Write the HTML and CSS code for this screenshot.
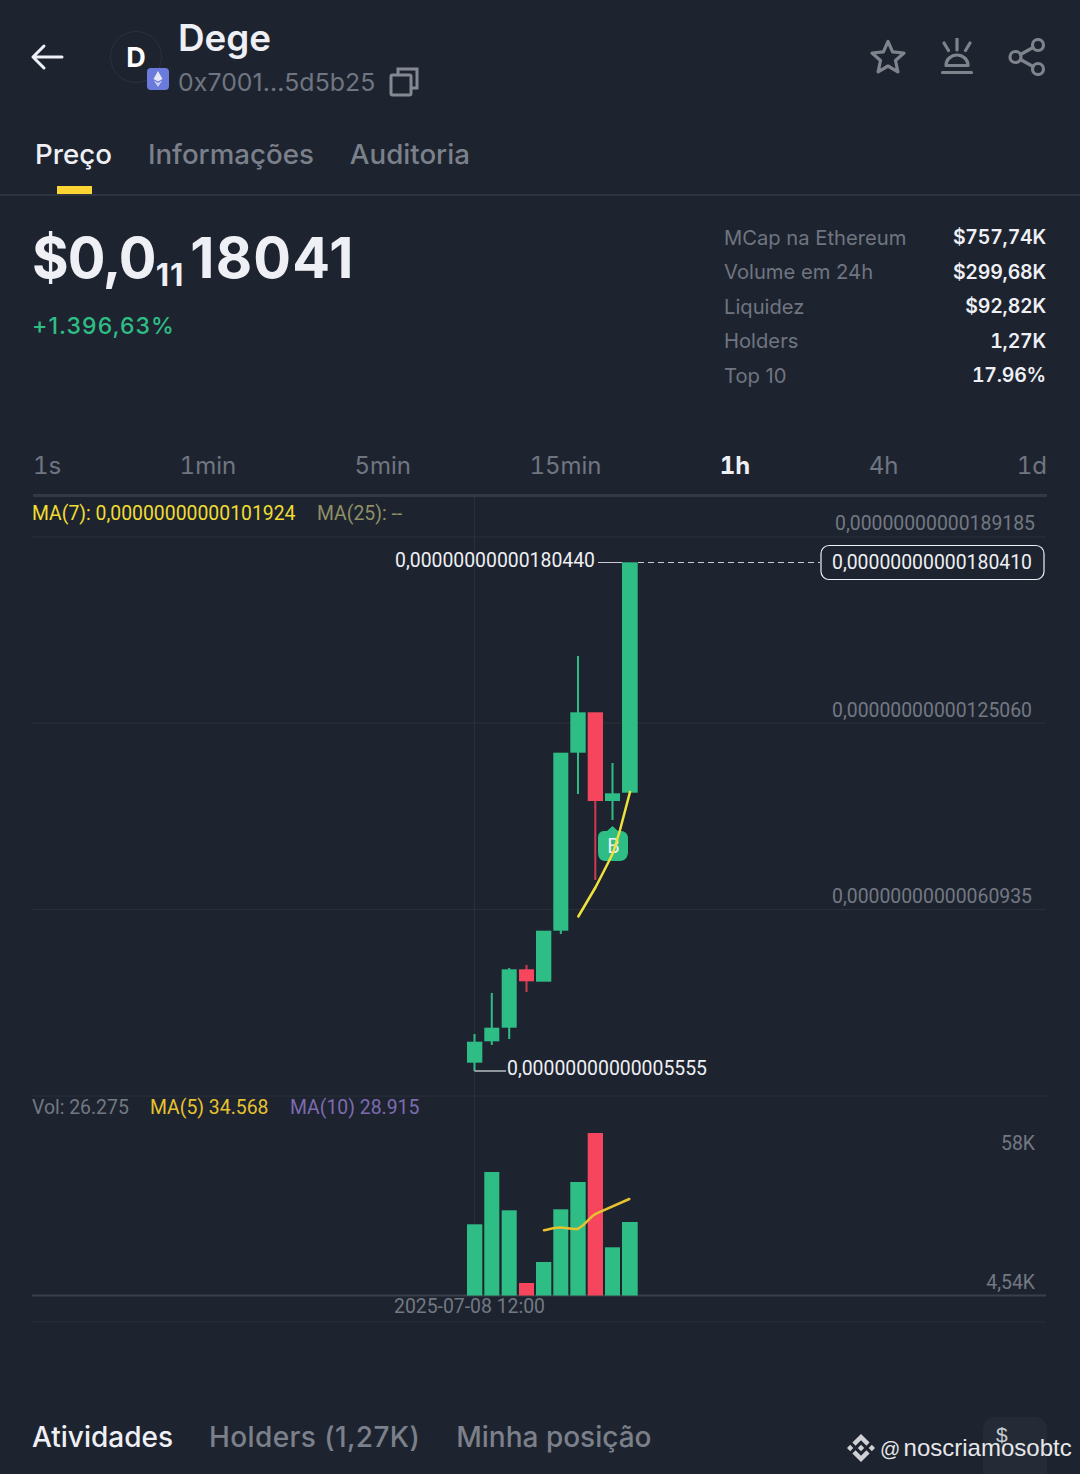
FILE: index.html
```html
<!DOCTYPE html>
<html lang="pt">
<head>
<meta charset="utf-8">
<title>Dege</title>
<link rel="stylesheet" href="styles.css">
</head>
<body>
<div class="page">
  <header class="top">
    <svg class="back" viewBox="0 0 34 28" width="34" height="28"><path d="M32 14H3M14 3 3 14l11 11"/></svg>
    <div class="avatar"><span>D</span>
      <svg class="chain" viewBox="0 0 22 22" width="22" height="22"><rect width="22" height="22" rx="4" fill="#6a7bdc"/><path d="M11 3 6.500 11 11 13.500 15.500 11z" fill="#e4e7f8"/><path d="M6.800 12.500 11 19l4.200-6.500L11 15z" fill="#cfd4f2"/></svg>
    </div>
    <div class="token">
      <div class="name">Dege</div>
      <div class="addr"><span>0x7001...5d5b25</span>
        <svg class="copy" viewBox="0 0 30 30" width="30" height="30"><path d="M9 7V2h19v19h-6"/><rect x="2" y="8" width="20" height="20" rx="1.500"/></svg>
      </div>
    </div>
    <div class="actions">
      <svg viewBox="0 0 36 36" width="36" height="36"><path d="M18 2.500 22.600 12.800 34 14 25.500 21.500 27.900 32.800 18 27 8.100 32.800 10.500 21.500 2 14 13.400 12.800z"/></svg>
      <svg viewBox="0 0 36 38" width="36" height="38"><path d="M18 1v11M5 5l4.500 7.500M31 5l-4.500 7.500M7 27.500c0-6 5-10.500 11-10.500s11 4.500 11 10.500zM3.500 34.500h29"/></svg>
      <svg viewBox="0 0 38 38" width="38" height="38"><circle cx="30" cy="7" r="5.500"/><circle cx="7.500" cy="19" r="5.500"/><circle cx="30" cy="31" r="5.500"/><path d="m12.500 16.500 12.500-7M12.500 21.500l12.500 7"/></svg>
    </div>
  </header>

  <nav class="tabs">
    <a class="tab on">Preço</a><a class="tab">Informações</a><a class="tab">Auditoria</a>
  </nav>

  <section class="summary">
    <div class="price-box">
      <div class="price">$0,0<sub>11</sub><span class="digits">18041</span></div>
      <div class="change">+1.396,63%</div>
    </div>
    <dl class="stats">
      <div><dt>MCap na Ethereum</dt><dd>$757,74K</dd></div>
      <div><dt>Volume em 24h</dt><dd>$299,68K</dd></div>
      <div><dt>Liquidez</dt><dd>$92,82K</dd></div>
      <div><dt>Holders</dt><dd>1,27K</dd></div>
      <div><dt>Top 10</dt><dd>17.96%</dd></div>
    </dl>
  </section>

  <div class="frames">
    <span>1s</span><span>1min</span><span>5min</span><span>15min</span><span class="on">1h</span><span>4h</span><span>1d</span>
  </div>

  <svg class="chart" viewBox="0 497 1080 830" width="1080" height="830">
    <g class="grid">
      <path d="M32 537H1046M32 723H1046M32 909.500H1046M32 1096H1046M32 1322H1046M474.500 497V1295"/>
      <path class="base" d="M32 1295.500H1046"/>
    </g>

    <text class="lb yellow" x="32" y="520">MA(7): 0,00000000000101924</text>
    <text class="lb olive" x="317" y="520">MA(25): --</text>
    <text class="lb grey end" x="1035" y="530">0,00000000000189185</text>
    <text class="lb grey end" x="1032" y="717">0,00000000000125060</text>
    <text class="lb grey end" x="1032" y="903">0,00000000000060935</text>

    <text class="lb white end" x="595" y="567">0,00000000000180440</text>
    <path class="hl" d="M598 562.500H622"/>
    <path class="dash" d="M638 562.500H820"/>
    <rect class="cur" x="821" y="545.500" width="223" height="34" rx="8"/>
    <text class="lb white" x="832" y="569">0,00000000000180410</text>

    <g class="up">
      <path class="wk" d="M474.500 1034V1071M491.800 993V1045M509.200 968V1039M560.800 930V934M578 656V794M612.500 763V820"/>
      <rect x="467" y="1041.700" width="15.300" height="21"/>
      <rect x="484.300" y="1027.700" width="15" height="13.600"/>
      <rect x="501.700" y="969.300" width="15" height="58.400"/>
      <rect x="536" y="930.700" width="15.300" height="51"/>
      <rect x="553.300" y="752.700" width="15" height="178"/>
      <rect x="570.300" y="712.300" width="15.400" height="40.400"/>
      <rect x="605" y="793.300" width="15" height="7.700"/>
      <rect x="622" y="562.300" width="15.700" height="230.400"/>
    </g>
    <g class="down">
      <path class="wk" d="M526.500 965V992M595.300 801V880"/>
      <rect x="519" y="969.300" width="15" height="12"/>
      <rect x="587.700" y="712.300" width="15.300" height="88.700"/>
    </g>

    <path class="marker" d="M612.500 826 618 831H621C625 831 628 834 628 838V852C628 857 625 861 620 861H605C600 861 598 857 598 852V838C598 834 600 831 604 831H607z"/>
    <text class="b" x="613.500" y="852.500">B</text>
    <path class="ma" d="M578.300 916.500 595.700 887 607 865 613 853 620 830 630 792"/>

    <path class="ll" d="M474.500 1071H506"/>
    <text class="lb white" x="507" y="1075">0,00000000000005555</text>

    <text class="lb grey" x="32" y="1114">Vol: 26.275</text>
    <text class="lb gold" x="150" y="1114">MA(5) 34.568</text>
    <text class="lb violet" x="290" y="1114">MA(10) 28.915</text>

    <g class="up">
      <rect x="467" y="1224.300" width="15.300" height="71.200"/>
      <rect x="484.300" y="1172" width="15" height="123.500"/>
      <rect x="501.700" y="1210.300" width="15" height="85.200"/>
      <rect x="536" y="1262" width="15.300" height="33.500"/>
      <rect x="553.300" y="1209.300" width="15" height="86.200"/>
      <rect x="570.300" y="1182" width="15.400" height="113.500"/>
      <rect x="605" y="1247.300" width="15" height="48.200"/>
      <rect x="622" y="1222" width="15.700" height="73.500"/>
    </g>
    <g class="down">
      <rect x="519" y="1283" width="15" height="12.500"/>
      <rect x="587.700" y="1133" width="15.300" height="162.500"/>
    </g>
    <path class="ma5" d="M544 1230.300C550 1229 555 1227.500 560 1227.500S572 1229.500 577.300 1229C585 1226 590 1216 596.700 1213.300L629.300 1199"/>

    <text class="lb grey end" x="1035" y="1150">58K</text>
    <text class="lb grey end" x="1035" y="1289">4,54K</text>
    <text class="lb grey" x="394" y="1313">2025-07-08 12:00</text>
  </svg>

  <nav class="bottom">
    <a class="on">Atividades</a><a class="wide">Holders (1,27K)</a><a>Minha posição</a>
  </nav>

  <div class="fab">$</div>
  <div class="mark">
    <svg viewBox="0 0 126.610 126.610" width="28" height="28"><path d="M38.730 53.200 63.320 28.620l24.600 24.600 14.300-14.310L63.320 0 24.420 38.900zM0 63.310 14.300 49l14.310 14.310-14.310 14.300zM38.730 73.410 63.320 98l24.600-24.600 14.310 14.290-38.900 38.910-38.910-38.880zM98 63.310 112.300 49l14.310 14.300-14.310 14.320zM77.830 63.300 63.320 48.780 52.590 59.510l-1.240 1.230-2.540 2.540 14.510 14.500 14.510-14.470z"/></svg>
    <span><span class="at">@</span> noscriamosobtc</span>
  </div>
</div>
</body>
</html>
```

FILE: styles.css
```css
* { box-sizing: border-box; margin: 0; padding: 0; }
html, body { background: #1e242f; }
body { font-family: Inter, "Liberation Sans", sans-serif; color: #eef0f5; }
.page { position: relative; width: 1080px; height: 1474px; overflow: hidden; }

.top { display: flex; align-items: flex-start; height: 130px; padding: 16px 34px 0 30px; }
.back { margin: 27px 0 0 0; flex: none; fill: none; stroke: #eef0f5; stroke-width: 3; stroke-linecap: round; stroke-linejoin: round; }
.avatar { position: relative; flex: none; width: 52px; height: 52px; margin: 15px 16px 0 46px; border: 1px solid #2b323d; border-radius: 50%; display: flex; align-items: center; justify-content: center; font-size: 27px; font-weight: 700; color: #fff; }
.chain { position: absolute; right: -8px; bottom: -8px; }
.name { font-size: 36.800px; font-weight: 600; line-height: 44px; }
.addr { display: flex; align-items: center; gap: 13px; margin-top: 5px; font-size: 24.800px; letter-spacing: 0.100px; line-height: 34px; color: #6f7581; }
.copy { fill: none; stroke: #848892; stroke-width: 3; }
.actions { margin-left: auto; display: flex; align-items: center; gap: 33px; padding-top: 22px; }
.actions svg { fill: none; stroke: #7f838c; stroke-width: 3.200; stroke-linecap: round; stroke-linejoin: round; }

.tabs { display: flex; gap: 36px; height: 66px; padding: 6px 0 0 35px; border-bottom: 2px solid #2f3540; }
.tab { position: relative; font-size: 27.700px; font-weight: 500; line-height: 36px; color: #7b808b; }
.tab.on { color: #eef0f5; }
.tab.on::after { content: ""; position: absolute; left: 22px; top: 50px; width: 35px; height: 8px; background: #fcd535; }

.summary { display: flex; justify-content: space-between; height: 233px; padding: 28px 34px 0 32px; }
.price { font-size: 56px; font-weight: 700; line-height: 68px; letter-spacing: -1px; white-space: nowrap; }
.price sub { font-size: 31px; font-weight: 700; line-height: 0; vertical-align: -8px; letter-spacing: 1px; margin-right: 6px; }
.digits { letter-spacing: 1.200px; }
.change { margin-top: 19px; font-size: 23px; font-weight: 500; line-height: 30px; letter-spacing: 1.100px; color: #2ebd85; }
.stats { width: 322px; margin-top: -3.800px; }
.stats div { display: flex; justify-content: space-between; height: 34.500px; align-items: center; font-size: 20.200px; }
.stats dt { color: #6f7581; }
.stats dd { font-size: 19.500px; font-weight: 600; letter-spacing: -0.200px; font-variant-numeric: tabular-nums; color: #eef0f5; }

.frames { display: flex; justify-content: space-between; height: 68px; margin: 0 33px; padding-top: 26px; border-bottom: 3px solid #343a45; font-size: 24px; line-height: 22px; font-variant-numeric: tabular-nums; color: #6f7581; }
.frames .on { color: #eef0f5; font-weight: 700; }

.chart { display: block; font-family: Roboto, "Liberation Sans", sans-serif; }
.grid path { fill: none; stroke: #2a303b; stroke-width: 1; }
.grid .base { stroke: #3a404b; stroke-width: 2; }
.lb { font-size: 19.400px; }
.end { text-anchor: end; }
.yellow { fill: #f0dc33; }
.olive { fill: #8f9066; }
.grey { fill: #737883; }
.white { fill: #eef0f5; }
.gold { fill: #e6c22f; }
.violet { fill: #7d6bb0; }
.hl { stroke: #c9ccd2; stroke-width: 1; }
.dash { stroke: #c9ccd2; stroke-width: 1; stroke-dasharray: 6 4; }
.cur { fill: #1e242f; stroke: #eef0f5; stroke-width: 1.200; }
.up rect { fill: #2ebd85; }
.up .wk { fill: none; stroke: #2ebd85; stroke-width: 2; }
.down rect { fill: #f6465d; }
.down .wk { fill: none; stroke: #d03a50; stroke-width: 2; }
.marker { fill: #2ebd85; }
.b { font-size: 20px; fill: #eef0f5; text-anchor: middle; }
.ma { fill: none; stroke: #f0e13d; stroke-width: 2.500; stroke-linecap: round; stroke-linejoin: round; }
.ma5 { fill: none; stroke: #e6c22f; stroke-width: 2.500; stroke-linecap: round; }
.ll { fill: none; stroke: #b9bcc3; stroke-width: 1.500; }

.bottom { display: flex; gap: 36px; margin-top: 92px; padding-left: 32px; font-size: 28px; font-weight: 500; line-height: 36px; color: #7b808b; }
.bottom .on { color: #eef0f5; }
.bottom .wide { letter-spacing: 0.400px; }

.fab { position: absolute; left: 983px; top: 1417px; width: 64px; height: 57px; padding: 6px 0 0 13px; border-radius: 12px 12px 0 0; background: #252b36; font-size: 21px; color: #c8cbd1; font-family: "Liberation Sans", sans-serif; }
.mark { position: absolute; left: 847px; top: 1434px; display: flex; align-items: center; gap: 5px; height: 28px; font-family: "Liberation Sans", sans-serif; font-size: 24px; word-spacing: -3.400px; color: #e6e7ea; white-space: nowrap; }
.at { font-size: 20px; }
.mark svg { fill: #cfd1d6; }
```
